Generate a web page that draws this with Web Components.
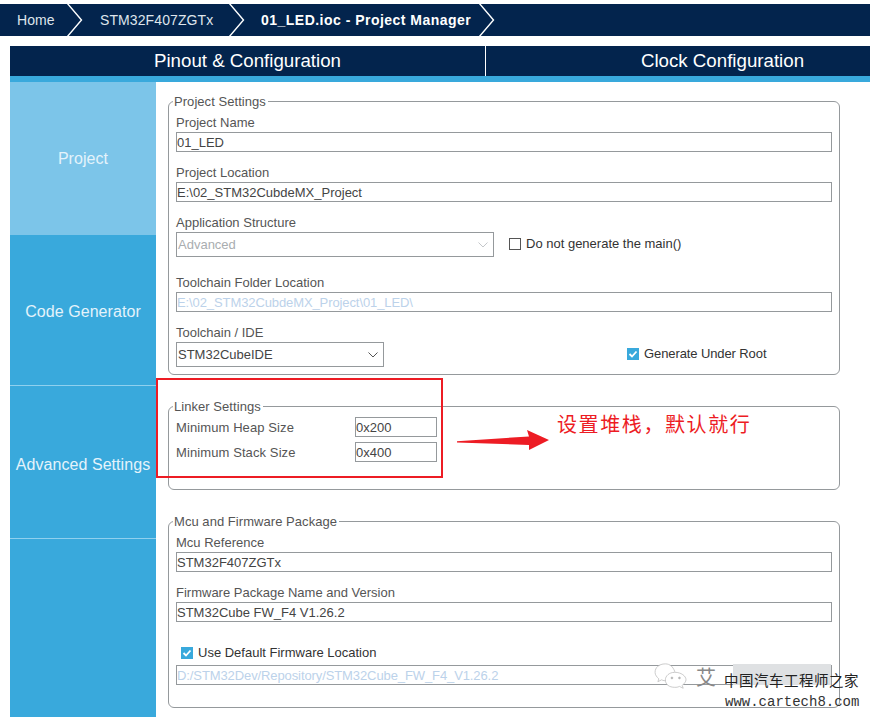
<!DOCTYPE html>
<html>
<head>
<meta charset="utf-8">
<title>Project Manager</title>
<style>
html, body { margin: 0; padding: 0; background: #fff; }
body { font-family: "Liberation Sans", Arial, sans-serif; width: 870px; height: 717px; overflow: hidden; position: relative; }
</style>
</head>
<body>
<cube-breadcrumb>
  <cube-crumb>Home</cube-crumb>
  <cube-crumb style="--w: 162px">STM32F407ZGTx</cube-crumb>
  <cube-crumb style="--w: 250px" current>01_LED.ioc - Project Manager</cube-crumb>
</cube-breadcrumb>

<cube-tabs></cube-tabs>

<cube-body>
  <cube-side slot="side"></cube-side>

  <cube-panel title="Project Settings" style="--h: 274px">
    <cube-field label="Project Name" value="01_LED"></cube-field>
    <cube-field label="Project Location" value="E:\02_STM32CubdeMX_Project"></cube-field>
    <cube-row style="--rh: 60px">
      <cube-select label="Application Structure" value="Advanced" width="318" disabled></cube-select>
      <cube-check style="--ml: 15px; --mt: 21px">Do not generate the main()</cube-check>
    </cube-row>
    <cube-field label="Toolchain Folder Location" value="E:\02_STM32CubdeMX_Project\01_LED\" disabled></cube-field>
    <cube-row>
      <cube-select label="Toolchain / IDE" value="STM32CubeIDE" width="208"></cube-select>
      <cube-check checked style="--ml: 243px; --mt: 21px; --cls: -0.1px">Generate Under Root</cube-check>
    </cube-row>
  </cube-panel>

  <cube-panel title="Linker Settings" style="--h: 84px; --mt: 31px; --pt: 8px">
    <cube-pair label="Minimum Heap Size" value="0x200"></cube-pair>
    <cube-pair label="Minimum Stack Size" value="0x400"></cube-pair>
  </cube-panel>

  <cube-panel title="Mcu and Firmware Package" style="--h: 187px; --mt: 31px">
    <cube-field label="Mcu Reference" value="STM32F407ZGTx"></cube-field>
    <cube-field label="Firmware Package Name and Version" value="STM32Cube FW_F4 V1.26.2"></cube-field>
    <cube-check checked style="--ml: 5px; --mt: 10px">Use Default Firmware Location</cube-check>
    <cube-field value="D:/STM32Dev/Repository/STM32Cube_FW_F4_V1.26.2" disabled style="--fmt: 3px"></cube-field>
  </cube-panel>
</cube-body>

<cube-note></cube-note>
<cube-watermark></cube-watermark>

<script>
const define = (name, html, init) => {
  customElements.define(name, class extends HTMLElement {
    constructor() {
      super()
      this.attachShadow({ mode: "open" }).innerHTML = html
    }
    connectedCallback() {
      if (init) init(this, this.shadowRoot)
    }
  })
}

const chevron = `<svg class="chev" width="17" height="32" viewBox="0 0 17 32"><path d="M1 -1 L15.5 16 L1 33" fill="none" stroke="#fff" stroke-width="1.4"/></svg>`

define("cube-breadcrumb", `
<style>
:host { display: flex; height: 32px; margin-top: 4px; background: #03244d; }
</style>
<slot></slot>`)

define("cube-crumb", `
<style>
:host { display: flex; align-items: center; height: 32px; width: var(--w, 83px); box-sizing: border-box; position: relative; padding-left: 17px; color: #dfe5ec; font-size: 14px; letter-spacing: 0.1px; white-space: nowrap; }
:host([current]) { color: #fff; font-weight: bold; font-size: 14px; letter-spacing: 0.48px; padding-left: 16px; }
.chev { position: absolute; right: 0; top: 0; }
</style>
<slot></slot>${chevron}`)

define("cube-tabs", `
<style>
:host { display: flex; height: 30px; margin: 10px 0 0 10px; background: #03244d; color: #fff; font-size: 18.7px; border-bottom: 6px solid #39a9dc; overflow: hidden; }
div { display: flex; flex: none; align-items: center; justify-content: center; height: 30px; width: 476px; box-sizing: border-box; white-space: nowrap; }
.a { border-right: 1px solid #fff; }
.b { padding-right: 3px; }
</style>
<div class="a">Pinout &amp; Configuration</div>
<div class="b">Clock Configuration</div>`)

define("cube-body", `
<style>
:host { display: flex; margin-left: 10px; height: 635px; }
.main { width: 672px; margin-left: 12px; padding-top: 19px; }
</style>
<slot name="side"></slot>
<div class="main"><slot></slot></div>`)

define("cube-side", `
<style>
:host { display: flex; flex-direction: column; width: 146px; height: 635px; background: #39a9dc; color: #fff; font-size: 16px; }
div { display: flex; align-items: center; justify-content: center; box-sizing: border-box; color: #e4f3fb; white-space: nowrap; letter-spacing: 0.06px; }
.on { height: 153px; background: #7cc5e9; }
.c { height: 151px; border-bottom: 1px solid #8fd0ee; padding-top: 4px; }
.d { height: 153px; border-bottom: 1px solid #8fd0ee; padding-top: 6px; }
</style>
<div class="on">Project</div>
<div class="c">Code Generator</div>
<div class="d">Advanced Settings</div>`)

define("cube-panel", `
<style>
:host { display: block; box-sizing: border-box; height: var(--h); margin-top: var(--mt, 0); position: relative; border: 1px solid #95999c; border-radius: 6px; padding: var(--pt, 11px) 7px 0 7px; color: #444; font-size: 13px; }
.t { position: absolute; left: 4px; top: -8px; background: #fff; padding: 0 2px 0 1px; line-height: 15px; font-size: 13px; color: #555; letter-spacing: 0.05px; }
</style>
<span class="t"></span><slot></slot>`, (el, root) => {
  root.querySelector(".t").textContent = el.getAttribute("title")
  el.removeAttribute("title")
})

const labelCss = `
.l { display: block; height: 19px; line-height: 19px; font-size: 13px; color: #555; white-space: nowrap; }
`

define("cube-field", `
<style>
:host { display: block; height: 50px; }
${labelCss}
.f { display: block; box-sizing: border-box; height: 20px; line-height: 20px; margin-top: var(--fmt, 0); border: 1px solid #95999c; font-size: 13px; color: #444; white-space: nowrap; overflow: hidden; }
:host([disabled]) .f { color: #bcd2ea; letter-spacing: -0.1px; }
</style>
<span class="l"></span><span class="f"></span>`, (el, root) => {
  const l = root.querySelector(".l")
  if (el.hasAttribute("label")) l.textContent = el.getAttribute("label")
  else l.remove()
  root.querySelector(".f").textContent = el.getAttribute("value")
})

define("cube-row", `
<style>
:host { display: flex; height: var(--rh, 50px); }
</style>
<slot></slot>`)

define("cube-select", `
<style>
:host { display: block; }
${labelCss}
.f { display: flex; align-items: center; justify-content: space-between; box-sizing: border-box; height: 25px; border: 1px solid #95999c; padding: 0 5px 0 1px; font-size: 13px; color: #444; }
:host([disabled]) .f { color: #a9adb0; }
svg { display: block; }
:host([disabled]) path { stroke: #c4c7ca; }
</style>
<span class="l"></span>
<div class="f"><span class="v"></span>
<svg width="10" height="6" viewBox="0 0 10 6"><path d="M0.5 0.5 L5 5 L9.5 0.5" fill="none" stroke="#555" stroke-width="1"/></svg></div>`, (el, root) => {
  root.querySelector(".l").textContent = el.getAttribute("label")
  root.querySelector(".v").textContent = el.getAttribute("value")
  root.querySelector(".f").style.width = el.getAttribute("width") + "px"
})

define("cube-check", `
<style>
:host { display: flex; align-items: center; gap: 5px; height: 19px; margin: var(--mt, 0) 0 0 var(--ml, 0); font-size: 13px; letter-spacing: var(--cls, 0); color: #333; white-space: nowrap; }
.b { width: 12px; height: 12px; box-sizing: border-box; border: 1px solid #555; background: #fff; }
:host([checked]) .b { border: 0; background: #39a9dc; }
svg { display: none; }
:host([checked]) svg { display: block; }
</style>
<div class="b"><svg width="12" height="12" viewBox="0 0 12 12"><path d="M2.5 6 L5 8.5 L9.5 3.5" fill="none" stroke="#fff" stroke-width="1.8"/></svg></div><slot></slot>`)

define("cube-pair", `
<style>
:host { display: flex; align-items: flex-start; height: 25px; font-size: 13px; color: #555; }
.l { width: 179px; margin-top: 3px; line-height: 20px; white-space: nowrap; letter-spacing: 0.1px; }
.f { box-sizing: border-box; width: 82px; height: 20px; margin-top: 2px; line-height: 20px; border: 1px solid #95999c; color: #444; overflow: hidden; }
</style>
<span class="l"></span><span class="f"></span>`, (el, root) => {
  root.querySelector(".l").textContent = el.getAttribute("label")
  root.querySelector(".f").textContent = el.getAttribute("value")
})

// red callout drawn on top of the screenshot
define("cube-note", `
<style>
:host { display: block; position: absolute; left: 0; top: 0; width: 870px; height: 717px; pointer-events: none; }
.box { position: absolute; left: 156px; top: 378px; width: 287px; height: 100px; box-sizing: border-box; border: 2px solid #ed1c24; }
svg { position: absolute; left: 456px; top: 428px; }
.txt { position: absolute; left: 557px; top: 411px; font-family: "Noto Sans CJK SC", sans-serif; font-size: 20px; line-height: 26px; letter-spacing: 1.6px; color: #ed1c24; white-space: nowrap; }
</style>
<div class="box"></div>
<svg width="96" height="24" viewBox="0 0 96 24"><path d="M1 13.2 L1 14.6 L73 17 L73 22 L93 12 L71 2 L73 8.5 Z" fill="#ed1c24"/></svg>
<div class="txt">设置堆栈，默认就行</div>`)

define("cube-watermark", `
<style>
:host { display: block; position: absolute; left: 0; top: 0; width: 870px; height: 717px; pointer-events: none; }
.g { position: absolute; left: 733px; top: 664px; width: 98px; height: 21px; background: #dfe1e3; }
svg { position: absolute; left: 654px; top: 662px; }
.ai { position: absolute; left: 696px; top: 664px; font: 20px "Noto Sans CJK SC", sans-serif; line-height: 26px; color: #888; }
.zh { position: absolute; left: 724px; top: 669px; font: 14.5px "Noto Sans CJK SC", sans-serif; line-height: 22px; color: #222; letter-spacing: 0.5px; white-space: nowrap; }
.url { position: absolute; left: 725px; top: 693px; font: 14px "Liberation Mono", monospace; line-height: 18px; color: #333; white-space: nowrap; }
</style>
<div class="g"></div>
<svg width="34" height="30" viewBox="0 0 36 32" fill="#fff" stroke="#bbb" stroke-width="0.8">
<path d="M12 2 C5 2 1 6 1 11 C1 14 3 16 5 18 L4 21 L8 19 C10 20 11 20 13 20 L22 10 C20 5 17 2 12 2 Z"/>
<path d="M22 11 C16 11 12 15 12 19 C12 24 16 27 22 27 C24 27 25 27 27 26 L31 28 L30 25 C32 23 34 21 34 19 C34 15 29 11 22 11 Z"/>
<circle cx="19" cy="17" r="1" fill="#aaa"/><circle cx="27" cy="17" r="1" fill="#aaa"/>
</svg>
<span class="ai">艾</span>
<span class="zh">中国汽车工程师之家</span>
<span class="url">www.cartech8.com</span>`)
</script>
</body>
</html>
